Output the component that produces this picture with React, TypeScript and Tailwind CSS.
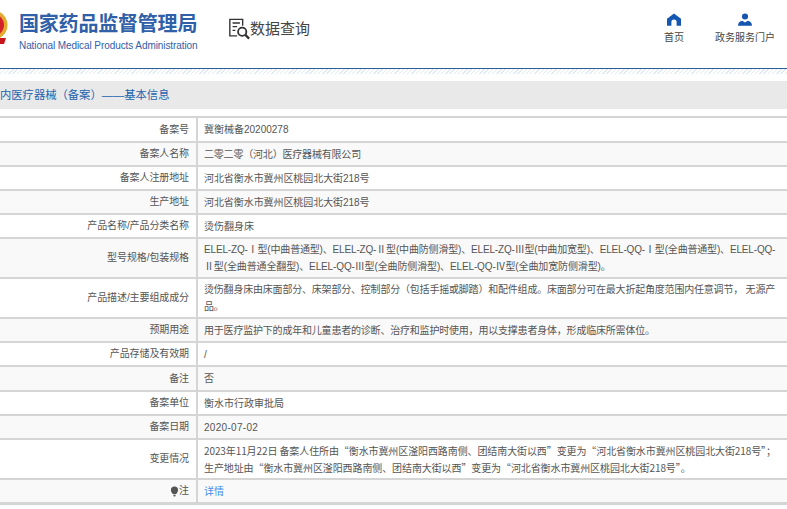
import React from 'react';

const fontStack = "font-['Liberation_Sans','Noto_Sans_CJK_SC',sans-serif]";

interface Row {
  label: React.ReactNode;
  value: React.ReactNode;
  tall?: boolean;
  height?: string;
  valueClass?: string;
}

const rows: Row[] = [
  { label: '备案号', value: '冀衡械备20200278', height: 'h-[23px]' },
  { label: '备案人名称', value: '二零二零（河北）医疗器械有限公司', valueClass: 'tracking-[-0.19px]' },
  { label: '备案人注册地址', value: '河北省衡水市冀州区桃园北大街218号', valueClass: 'tracking-[-0.07px]' },
  { label: '生产地址', value: '河北省衡水市冀州区桃园北大街218号', valueClass: 'tracking-[-0.07px]' },
  { label: '产品名称/产品分类名称', value: '烫伤翻身床' },
  {
    label: '型号规格/包装规格',
    tall: true,
    valueClass: 'tracking-[-0.13px]',
    value: (
      <>
        <span className="tracking-[-0.17px]">ELEL-ZQ-Ⅰ型(中曲普通型)、ELEL-ZQ-Ⅱ型(中曲防侧滑型)、ELEL-ZQ-Ⅲ型(中曲加宽型)、ELEL-QQ-Ⅰ型(全曲普通型)、ELEL-QQ-</span>
        <br />
        Ⅱ型(全曲普通全翻型)、ELEL-QQ-Ⅲ型(全曲防侧滑型)、ELEL-QQ-Ⅳ型(全曲加宽防侧滑型)。
      </>
    ),
  },
  {
    label: '产品描述/主要组成成分',
    tall: true,
    valueClass: 'tracking-[-0.2px]',
    value: (
      <>
        烫伤翻身床由床面部分、床架部分、控制部分（包括手摇或脚踏）和配件组成。床面部分可在最大折起角度范围内任意调节， 无源产
        <br />
        品。
      </>
    ),
  },
  {
    label: '预期用途',
    valueClass: 'tracking-[-0.2px]',
    value: '用于医疗监护下的成年和儿童患者的诊断、治疗和监护时使用，用以支撑患者身体，形成临床所需体位。',
  },
  { label: '产品存储及有效期', value: '/' },
  { label: '备注', value: '否', height: 'h-[25px]' },
  { label: '备案单位', value: '衡水市行政审批局' },
  { label: '备案日期', value: '2020-07-02', valueClass: 'tracking-[0.3px]' },
  {
    label: '变更情况',
    tall: true,
    valueClass: "font-['Noto_Sans_CJK_SC','Liberation_Sans',sans-serif] tracking-[-0.1px]",
    value: (
      <>
        2023年11月22日 备案人住所由“衡水市冀州区滏阳西路南侧、团结南大街以西”变更为“河北省衡水市冀州区桃园北大街218号”；
        <br />
        生产地址由“衡水市冀州区滏阳西路南侧、团结南大街以西”变更为“河北省衡水市冀州区桃园北大街218号”。
      </>
    ),
  },
  {
    label: (
      <span className="flex items-center justify-end">
        <svg viewBox="0 0 10 12" className="h-[11px] w-[9px] fill-[#555]">
          <path d="M5 0.5a4 4 0 0 1 4 4c0 2-1.6 3-2.3 4.6H3.3C2.6 7.500 1 6.500 1 4.500a4 4 0 0 1 4-4zM3.600 9.800h2.800L5.800 11.500H4.200z" />
        </svg>
        注
      </span>
    ),
    value: <span className="text-[#3f8ee8]">详情</span>,
  },
];

function Emblem() {
  return (
    <svg viewBox="0 0 8 32" className="h-[32px] w-[8px]">
      <circle cx="-7" cy="13" r="14.500" fill="#e3ac2f" />
      <circle cx="-7" cy="13" r="11" fill="#d2232a" />
      <circle cx="-7" cy="13" r="7" fill="#edc24a" />
      <path d="M0 26H6L4 32H0z" fill="#c8161d" />
    </svg>
  );
}

function SearchDocIcon() {
  return (
    <svg viewBox="0 0 24 24" className="h-[23px] w-[22px]" fill="none" stroke="#333" strokeWidth="1.500">
      <path d="M10 20H2V2h14v7" />
      <path d="M5 6h8M5 10h5M5 14h3" />
      <circle cx="15.500" cy="15.500" r="4.500" strokeWidth="2" />
      <path d="M19 19L23 23" strokeWidth="2.500" />
    </svg>
  );
}

export default function App() {
  return (
    <div className={`h-[509px] w-[787px] overflow-hidden bg-white ${fontStack}`}>
      {/* Header */}
      <div className="flex h-[69px] items-start border-b border-[#2a6099]">
        <div className="mt-[12px]">
          <Emblem />
        </div>
        <div className="ml-[11px] mt-[12px] w-[180px]">
          <div className="whitespace-nowrap text-[20px] font-bold leading-[24px] tracking-[-0.2px] text-[#2f60a8]">国家药品监督管理局</div>
          <div className="mt-[4px] whitespace-nowrap text-[10px] leading-[12px] tracking-[-0.08px] text-[#2f60a8]">National Medical Products Administration</div>
        </div>
        <div className="ml-[29px] mt-[17px] flex items-center">
          <SearchDocIcon />
          <span className="text-[15px] leading-[22px] text-[#444]">数据查询</span>
        </div>
        <div className="ml-auto mt-[13px] flex">
          <div className="flex w-[60px] flex-col items-center">
            <svg viewBox="0 0 16 14" className="h-[13px] w-[14px] fill-[#1557b0]">
              <path d="M8 0L16 6V14H11V10a3 3 0 0 0-6 0V14H0V6z" />
            </svg>
            <span className="mt-[5px] text-[10px] leading-[14px] text-[#444]">首页</span>
          </div>
          <div className="ml-[11px] mr-[12px] flex w-[60px] flex-col items-center">
            <svg viewBox="0 0 16 14" className="h-[13px] w-[14px] fill-[#1557b0]">
              <circle cx="8" cy="3.500" r="3.500" />
              <path d="M0 14c0-3 2-5 5-5.500L8 10.500l3-2c3 .5 5 2.500 5 5.500z" />
            </svg>
            <span className="mt-[5px] whitespace-nowrap text-[10px] leading-[14px] text-[#444]">政务服务门户</span>
          </div>
        </div>
      </div>

      {/* Hatched strip */}
      <div className="h-[5px] bg-[repeating-linear-gradient(135deg,#dfeaf4_0,#dfeaf4_1px,#ffffff_1px,#ffffff_3px)]" />

      {/* Breadcrumb */}
      <div className="mt-[7px] h-[28px] whitespace-nowrap bg-[#e9e9e9] text-[11.3px] leading-[28px] text-[#2464ae]">
        内医疗器械（备案）——基本信息
      </div>

      {/* Detail table */}
      <div className="mt-[7px] border-b-[3px] border-t-2 border-[#d5d5d5]">
        {rows.map((row, i) => (
          <div
            key={i}
            className={`flex border-[#d5d5d5] text-[10px] text-[#555] ${i > 0 ? 'border-t-2' : ''} ${row.height ?? (row.tall ? 'h-[40px]' : 'h-[24px]')} ${i % 2 === 1 ? 'bg-[#f9f9f9]' : 'bg-white'}`}
          >
            <div className="flex w-[198px] shrink-0 items-center justify-end border-r-2 border-[#d5d5d5] pr-[7px] leading-[14px] tracking-[-0.1px]">{row.label}</div>
            <div className="flex items-center whitespace-nowrap pl-[6px] leading-[17px]">
              <div className={row.valueClass}>{row.value}</div>
            </div>
          </div>
        ))}
      </div>
    </div>
  );
}
